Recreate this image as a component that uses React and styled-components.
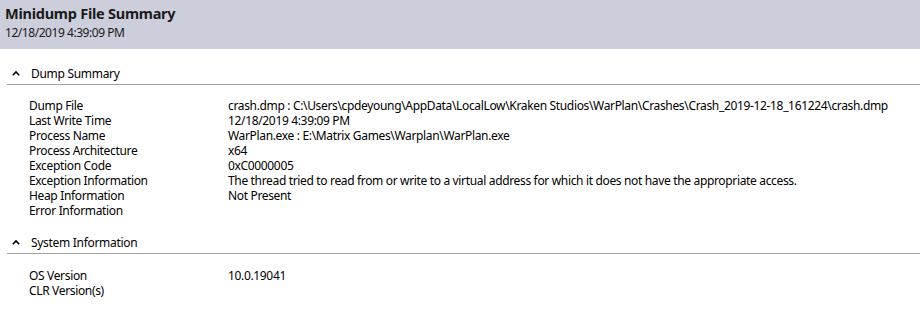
import React from "react";
import styled, { createGlobalStyle } from "styled-components";

const GlobalStyle = createGlobalStyle`
  html, body {
    margin: 0;
    padding: 0;
    background: #ffffff;
  }
  body {
    font-family: "Noto Sans", "Open Sans", sans-serif;
    color: #000000;
  }
`;

const Page = styled.div`
  width: 920px;
  height: 311px;
  overflow: hidden;
  background: #ffffff;
`;

const Header = styled.div`
  height: 49px;
  box-sizing: border-box;
  background: #cdcedb;
  padding: 3px 0 0 5px;
`;

const Title = styled.h1`
  margin: 0;
  font-size: 14.5px;
  font-weight: 700;
  line-height: 20px;
  letter-spacing: -0.25px;
  color: #1a1a1a;
`;

const Subtitle = styled.div`
  margin-top: 2px;
  font-size: 12px;
  line-height: 16px;
  letter-spacing: -0.45px;
  color: #1a1a1a;
`;

const Section = styled.section`
  padding-top: 13px;
`;

const SectionHead = styled.div`
  display: flex;
  align-items: center;
  height: 22px;
  margin-left: 7px;
  border-bottom: 1px solid #a0a0a0;
  font-size: 12px;
  letter-spacing: -0.3px;
  color: #000000;
`;

const Chevron = styled.svg`
  width: 8px;
  height: 6px;
  margin: 0 11px 0 5px;
`;

const Rows = styled.div`
  display: grid;
  grid-template-columns: 199px 1fr;
  padding: ${(p) => p.$top}px 0 0 29px;
  font-size: 12px;
  line-height: 15px;
  letter-spacing: -0.34px;
  color: #000000;
`;

const Label = styled.div`
  white-space: nowrap;
`;

const Value = styled.div`
  white-space: nowrap;
`;

const summary = [
  ["Dump File", "crash.dmp : C:\\Users\\cpdeyoung\\AppData\\LocalLow\\Kraken Studios\\WarPlan\\Crashes\\Crash_2019-12-18_161224\\crash.dmp"],
  ["Last Write Time", "12/18/2019 4:39:09 PM"],
  ["Process Name", "WarPlan.exe : E:\\Matrix Games\\Warplan\\WarPlan.exe"],
  ["Process Architecture", "x64"],
  ["Exception Code", "0xC0000005"],
  ["Exception Information", "The thread tried to read from or write to a virtual address for which it does not have the appropriate access."],
  ["Heap Information", "Not Present"],
  ["Error Information", ""],
];

const system = [
  ["OS Version", "10.0.19041"],
  ["CLR Version(s)", ""],
];

function Group({ title, rows, gap }) {
  return (
    <Section>
      <SectionHead>
        <Chevron viewBox="0 0 8 6">
          <path d="M0.8 5.2 L4 2 L7.2 5.2" fill="none" stroke="#000" strokeWidth="1.6" />
        </Chevron>
        {title}
      </SectionHead>
      <Rows $top={gap}>
        {rows.map(([k, v]) => (
          <React.Fragment key={k}>
            <Label>{k}</Label>
            <Value>{v}</Value>
          </React.Fragment>
        ))}
      </Rows>
    </Section>
  );
}

export default function App() {
  return (
    <Page>
      <GlobalStyle />
      <Header>
        <Title>Minidump File Summary</Title>
        <Subtitle>12/18/2019 4:39:09 PM</Subtitle>
      </Header>
      <Group title="Dump Summary" rows={summary} gap={13} />
      <Group title="System Information" rows={system} gap={14} />
    </Page>
  );
}
